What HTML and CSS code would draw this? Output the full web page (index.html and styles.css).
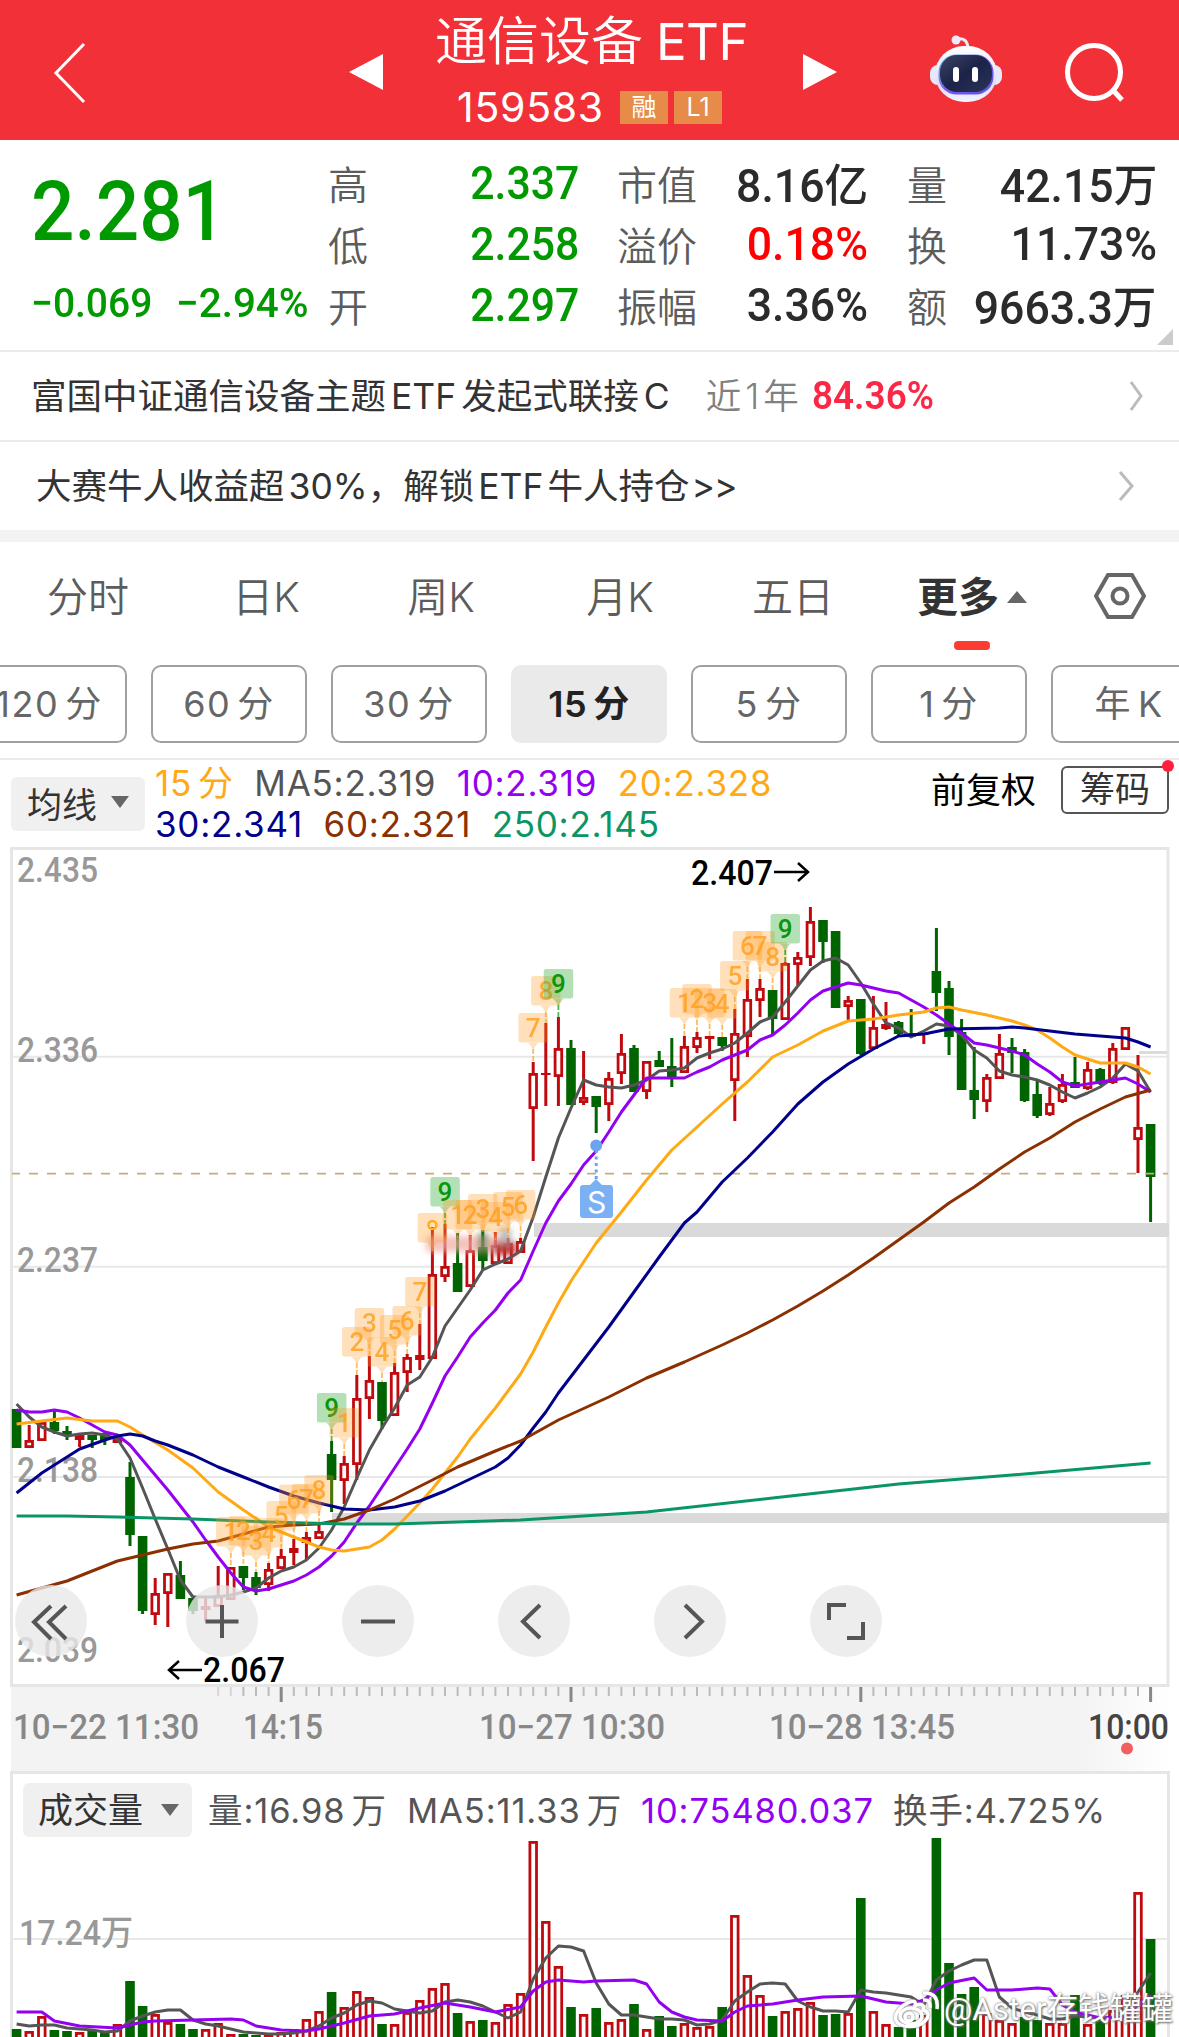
FILE: index.html
```html
<!DOCTYPE html>
<html lang="zh-CN">
<head>
<meta charset="utf-8">
<title>通信设备ETF 159583</title>
<link rel="stylesheet" href="styles.css">
</head>
<body>
<header class="topbar">
  <svg class="back" viewBox="0 0 40 64"><path d="M32 3L4 32L32 61"/></svg>
  <svg class="tri prev" viewBox="0 0 36 38"><path d="M0 19L36 0V38Z"/></svg>
  <div class="title">
    <div class="name">通信设备<span>ETF</span></div>
    <div class="code"><span class="code-no">159583</span><b>融</b><b>L1</b></div>
  </div>
  <svg class="tri next" viewBox="0 0 36 38"><path d="M36 19L0 0V38Z"/></svg>
  <svg class="robot" viewBox="0 0 74 70">
    <defs>
      <linearGradient id="shell" x1="0" y1="0" x2="0" y2="1"><stop offset="0" stop-color="#fff"/><stop offset=".7" stop-color="#dfdcf4"/><stop offset="1" stop-color="#f4f4ff"/></linearGradient>
      <linearGradient id="rim" x1="0" y1="0" x2="1" y2="1"><stop offset="0" stop-color="#59c8de"/><stop offset=".5" stop-color="#7a5cf0"/><stop offset="1" stop-color="#5a4fd8"/></linearGradient>
      <linearGradient id="visor" x1="0" y1="0" x2="1" y2="1"><stop offset="0" stop-color="#3d4366"/><stop offset=".5" stop-color="#1b2348"/><stop offset="1" stop-color="#2b3358"/></linearGradient>
    </defs>
    <path d="M28 4Q38 2 39 13" fill="none" stroke="#eceaf8" stroke-width="3"/>
    <circle cx="27" cy="5" r="4.5" fill="#eceaf8"/>
    <rect x="1" y="30" width="72" height="20" rx="8" fill="#e9e7fa"/>
    <rect x="6" y="11" width="62" height="56" rx="29" fill="url(#shell)"/>
    <rect x="9.500" y="19.500" width="55" height="40" rx="18" fill="url(#rim)"/>
    <rect x="11" y="20" width="52" height="37" rx="17" fill="url(#visor)"/>
    <rect x="24" y="32" width="6" height="15" rx="3" fill="#fff"/>
    <rect x="43" y="32" width="6" height="15" rx="3" fill="#fff"/>
  </svg>
  <svg class="search" viewBox="0 0 62 62"><circle cx="30" cy="30" r="26.500"/><path d="M48 47L58 58"/></svg>
</header>

<section class="quote">
  <div class="price">
    <div class="last"><span class="num">2.281</span></div>
    <div class="delta"><span class="num">−0.069</span><span class="num">−2.94%</span></div>
  </div>
  <dl class="c1">
    <div><dt>高</dt><dd class="down num">2.337</dd></div>
    <div><dt>低</dt><dd class="down num">2.258</dd></div>
    <div><dt>开</dt><dd class="down num">2.297</dd></div>
  </dl>
  <dl class="c2">
    <div><dt>市值</dt><dd class="num">8.16<i>亿</i></dd></div>
    <div><dt>溢价</dt><dd class="num up">0.18%</dd></div>
    <div><dt>振幅</dt><dd class="num">3.36%</dd></div>
  </dl>
  <dl class="c3">
    <div><dt>量</dt><dd class="num">42.15<i>万</i></dd></div>
    <div><dt>换</dt><dd class="num">11.73%</dd></div>
    <div><dt>额</dt><dd class="num">9663.3<i>万</i></dd></div>
  </dl>
  <span class="corner"></span>
</section>

<a class="link-row fund"><span>富国中证通信设备主题<em>ETF</em>发起式联接<em>C</em></span><span class="year">近<em>1</em>年</span><span class="gain num">84.36%</span>
  <svg viewBox="0 0 16 32"><path d="M2 2L12 16L2 30"/></svg></a>
<a class="link-row contest"><span>大赛牛人收益超<em class="pct">30%</em>，解锁<em>ETF</em>牛人持仓<em class="gt">&gt;&gt;</em></span>
  <svg viewBox="0 0 16 32"><path d="M2 2L14 16L2 30"/></svg></a>
<div class="gap"></div>

<nav class="tabs">
  <span>分时</span><span>日K</span><span>周K</span><span>月K</span><span>五日</span>
  <span class="on">更多<i class="caret-up"></i></span>
  <svg class="gear" viewBox="0 0 52 48"><path d="M14 3H38L50 24L38 45H14L2 24Z"/><circle cx="26" cy="24" r="7.500"/></svg>
</nav>
<div class="periods">
  <span>120<i>分</i></span><span>60<i>分</i></span><span>30<i>分</i></span><span class="on">15<i>分</i></span><span>5<i>分</i></span><span>1<i>分</i></span><span>年<i>K</i></span>
</div>

<section class="indicator">
  <div class="select">均线<i class="caret-down"></i></div>
  <div class="ma">
    <div><span class="c-orange">15<u>分</u></span><span class="c-gray">MA5:2.319</span><span class="c-purple">10:2.319</span><span class="c-orange">20:2.328</span></div>
    <div><span class="c-navy">30:2.341</span><span class="c-brown">60:2.321</span><span class="c-green">250:2.145</span></div>
  </div>
  <div class="adjust">前复权</div>
  <div class="chips">筹码<i></i></div>
</section>

<section class="chart">
  <svg id="kline" class="kline" viewBox="0 846 1179 840"></svg>
  <div class="controls">
    <button><svg viewBox="0 0 72 72"><path d="M36 21L19 37L36 54M51 21L34 37L51 54"/></svg></button>
    <button><svg viewBox="0 0 72 72"><path d="M36 20V53M19.500 36.500H52.500"/></svg></button>
    <button><svg viewBox="0 0 72 72"><path d="M19 36.500H53"/></svg></button>
    <button><svg viewBox="0 0 72 72"><path d="M42 20L25 36.500L42 53"/></svg></button>
    <button><svg viewBox="0 0 72 72"><path d="M31 20L48 36.500L31 53"/></svg></button>
    <button><svg viewBox="0 0 72 72"><path d="M19 35V20H36M37 53H53V37"/></svg></button>
  </div>
</section>

<svg id="axis" class="axis" viewBox="0 1686 1179 86"></svg>

<section class="volume">
  <div class="vol-head">
    <div class="select">成交量<i class="caret-down"></i></div>
    <span class="c-gray v1">量:16.98<u>万</u></span><span class="c-gray v2">MA5:11.33<u>万</u></span><span class="c-purple v3">10:75480.037</span><span class="c-gray v4">换手:4.725%</span>
  </div>
  <svg id="vol" class="vol" viewBox="0 1838 1179 199"></svg>
  <div class="credit">
    <svg viewBox="0 0 46 40"><path d="M17 12C8 15 1 24 3 30C6 38 24 39 32 31C38 25 34 21 30 20C32 14 27 13 22 16C23 12 22 10 17 12Z"/><ellipse cx="18" cy="26" rx="11" ry="8"/><circle cx="16" cy="27" r="4"/><path d="M30 10Q38 9 37 18M30 3Q46 2 44 19"/></svg>
    @Aster存钱罐罐
  </div>
</section>
<script src="chart.js"></script>
</body>
</html>
```
FILE: styles.css
```css
* { box-sizing: border-box; }
body { margin: 0; width: 1179px; height: 2037px; overflow: hidden; background: #fff; color: #333; font-family: Inter, "Noto Sans CJK SC", sans-serif; }
i, em { font-style: normal; }
u { text-decoration: none; margin-left: 6px; }
dl, dd { margin: 0; }
.num { font-family: Roboto, "Noto Sans CJK SC", sans-serif; font-weight: 500; display: inline-block; transform: scaleX(.93); transform-origin: left center; white-space: nowrap; }

.topbar { height: 140px; background: #f23038; color: #fff; display: flex; align-items: center; }
.topbar svg { display: block; flex: none; }
.back { width: 40px; height: 64px; margin: 6px 0 0 52px; fill: none; stroke: #fff; stroke-width: 3; }
.tri { width: 34px; height: 38px; fill: #fff; margin-top: 3px; }
.prev { margin-left: 257px; }
.title { width: 420px; padding: 4px 0 0 52px; height: 140px; }
.name { font-size: 52px; line-height: 76px; font-weight: 350; white-space: nowrap; }
.name span { margin-left: 13px; letter-spacing: -.6px; font-weight: 400; font-size: 51px; }
.code { display: flex; align-items: center; height: 54px; padding-left: 22px; }
.code-no { font-size: 41px; width: 163px; letter-spacing: .7px; }
.code b { background: #e68c48; width: 48px; height: 33px; font-size: 25px; line-height: 32px; text-align: center; font-weight: 400; margin-right: 6px; }
.robot { width: 74px; height: 70px; margin: -1px 0 0 92px; }
.search { width: 62px; height: 62px; margin: 6px 0 0 61px; fill: none; stroke: #fff; stroke-width: 5; }

.quote { position: relative; height: 212px; border-bottom: 2px solid #ebebeb; display: flex; padding-top: 12px; }
.price { width: 328px; padding-left: 31px; color: #090; }
.last { height: 116px; font-size: 84px; line-height: 116px; }
.last .num { transform: scaleX(.91); }
.delta { font-size: 41px; line-height: 70px; display: flex; }
.delta .num { width: 145px; transform: scaleX(.95); }
.delta .num:last-child { transform: scaleX(.985); }
.quote dl > div { height: 61px; display: flex; align-items: center; justify-content: space-between; }
.quote dt { font-size: 40px; font-weight: 350; color: #5c5c5c; }
.quote dd { font-size: 46px; transform: scaleX(.97); transform-origin: right center; color: #2b2b2b; }
.quote dd i { font-size: 45px; }
.quote dd.down { color: #090; transform: scaleX(.93); }
.quote dd.up { color: #f00; }
.c1 { width: 251px; }
.c2 { width: 251px; margin-left: 38px; }
.c3 { width: 250px; margin-left: 39px; }
.corner { position: absolute; right: 6px; bottom: 5px; border: 8px solid; border-color: transparent #ccc #ccc transparent; }

.link-row { display: flex; align-items: center; font-size: 35.5px; color: #333; white-space: nowrap; }
.link-row > span:not(.num) { margin-top: -5px; }
.link-row svg { width: 16px; height: 32px; margin-left: auto; fill: none; stroke: #bbb; stroke-width: 3; }
.fund { height: 90px; padding: 0 34px 0 31px; border-bottom: 2px solid #ebebeb; }
.fund em { margin: 0 5px; }
.year { margin-left: 31px; color: #808080; font-weight: 350; }
.year em { margin: 0 4px; }
.gain { margin-left: 13px; color: #fa2846; font-size: 38px; font-weight: 600; transform: scaleX(.97); }
.contest { height: 88px; padding: 0 45px 0 36px; }
.contest em { margin: 0 4px; }
.contest .pct { margin-right: 0; }
.contest .gt { margin-left: 2px; letter-spacing: -1px; }
.gap { height: 12px; background: #f3f3f3; }

.tabs { height: 123px; display: grid; grid-template-columns: 176px 180px 170px 188px 158px 208px 1fr; align-items: start; padding-top: 25px; font-size: 41px; line-height: 60px; font-weight: 350; color: #5c5c5c; text-align: center; }
.tabs .on { font-weight: 700; color: #333; position: relative; text-align: left; padding-left: 45px; }
.tabs .on::after { content: ""; position: absolute; left: 82px; top: 74px; width: 36px; height: 9px; border-radius: 4px; background: #fc3c30; }
.tabs .caret-up { display: inline-block; margin-left: 8px; vertical-align: 9px; border: 10px solid transparent; border-top: 0; border-bottom: 12px solid #666; }
.gear { width: 52px; height: 48px; margin: 5px 0 0 14px; fill: none; stroke: #666; stroke-width: 4; }
.periods { height: 95px; margin-left: -29px; width: 1240px; display: flex; gap: 24px; border-bottom: 2px solid #ebebeb; }
.periods span { width: 156px; height: 78px; flex: none; border: 2px solid #a0a0a0; border-radius: 10px; line-height: 74px; font-size: 36px; color: #666; text-align: center; letter-spacing: 1.5px; }
.periods i { margin-left: 6px; }
.periods .on { background: #eaeaea; border-color: #eaeaea; color: #222; font-weight: 600; letter-spacing: .5px; }

.indicator { height: 86px; display: flex; padding-left: 11px; font-size: 35px; white-space: nowrap; }
.select { background: #f0f0f0; border-radius: 6px; display: flex; align-items: center; justify-content: space-between; font-size: 35px; color: #333; }
.indicator .select { width: 134px; height: 54px; margin-top: 17px; padding: 0 16px 4px; flex: none; }
.caret-down { border: 9px solid transparent; border-bottom: 0; border-top: 12px solid #666; }
.ma { width: 786px; padding: 3px 0 0 10px; line-height: 41px; }
.ma div { display: flex; gap: 20.500px; letter-spacing: .75px; }
.c-orange { color: #ffa915; } .c-gray { color: #555; } .c-purple { color: #9400f0; } .c-navy { color: #00008b; } .c-brown { color: #8b3000; } .c-green { color: #0a9664; }
.adjust { color: #000; line-height: 60px; width: 130px; }
.chips { position: relative; width: 108px; height: 48px; margin-top: 6px; border: 2px solid #555; border-radius: 6px; line-height: 43px; text-align: center; }
.chips i { position: absolute; right: -7px; top: -8px; width: 12px; height: 12px; border-radius: 50%; background: #ff2040; }

.chart { position: relative; height: 840px; }
.kline, .axis, .vol { display: block; width: 1179px; overflow: visible; }
.kline text, .axis text, .vol text { font-family: Roboto, "Noto Sans CJK SC", sans-serif; font-weight: 500; font-size: 35px; }
.kline text.mark { font-size: 26px; }
.kline text.sell { font-family: Inter, sans-serif; font-size: 30px; font-weight: 400; }
.controls { position: absolute; left: 15px; top: 739px; display: flex; gap: 84px; }
.controls button { width: 72px; height: 72px; padding: 0; border: 0; border-radius: 50%; background: rgba(232, 232, 232, .8); }
.controls button:first-child { margin-right: 15px; }
.controls svg { display: block; fill: none; stroke: #555; stroke-width: 4; }
.axis { height: 86px; background: linear-gradient(90deg, transparent 11px, #f3f3f3 11px, #f3f3f3 1080px, #fff 1168px); }

.volume { position: relative; height: 265px; }
.volume::before { content: ""; position: absolute; left: 10px; right: 9px; top: -1px; bottom: -5px; border: 3px solid #e6e6e6; }
.vol-head { position: relative; height: 66px; padding: 11px 0 0 23px; display: flex; font-size: 34.5px; line-height: 56px; white-space: nowrap; letter-spacing: .9px; }
.vol-head .select { width: 169px; height: 54px; padding: 0 13px 0 15px; letter-spacing: 0; margin-right: 16px; }
.v1 { width: 199px; } .v2 { width: 234px; } .v3 { width: 252px; }
.vol { position: relative; height: 199px; }
.credit { position: absolute; left: 893px; top: 215px; height: 46px; display: flex; align-items: center; gap: 5px; color: #fff; font: 31.5px/46px Roboto, "Noto Sans CJK SC", sans-serif; white-space: nowrap; text-shadow: 0 0 3px #777, 1px 1px 2px #777; }
.credit svg { width: 46px; height: 40px; fill: none; stroke: #fff; stroke-width: 3.5; filter: drop-shadow(0 0 1px #777); }
```
FILE: chart.js
```js
const RED = '#c00a0f', GREEN = '#006400';
const X = i => +(16.6 + 12.6 * i).toFixed(1);
const line = (x1, y1, x2, y2, c, w, extra = '') => `<line x1="${x1}" y1="${y1}" x2="${x2}" y2="${y2}" stroke="${c}" stroke-width="${w}" ${extra}/>`;
const label = (x, y, s, len, fill, cls = '') => `<text x="${x}" y="${y}" fill="${fill}" class="${cls}"${len ? ` textLength="${len}" lengthAdjust="spacingAndGlyphs"` : ''}>${s}</text>`;
const curve = (pts, c) => `<polyline fill="none" stroke="${c}" stroke-width="3" stroke-linejoin="round" points="${pts.map(p => X(p[0]) + ',' + p[1]).join(' ')}"/>`;
const series = a => a.map((y, i) => [i, y]);
const pairs = s => s.trim().split(/\s+/).map(p => p.split(',').map(Number));

// one row per bar: up/down, high, body top, body bottom, low
const bars = `
d 1409 1409 1448 1448|u 1425 1440 1448 1448|u 1422 1422 1441 1441|d 1410 1422 1431 1434|d 1426 1431 1436 1440|f 1435 1435 1440 1447|d 1435 1435 1440 1448|d 1433 1433 1440 1445|f 1437 1437 1443 1443|d 1462 1477 1535 1546
d 1536 1536 1611 1614|u 1578 1593 1615 1625|u 1573 1573 1594 1627|d 1561 1575 1599 1599|d 1598 1598 1611 1614|f 1597 1606 1610 1621|u 1566 1595 1607 1607|u 1567 1567 1600 1600|d 1566 1566 1578 1590|d 1572 1577 1588 1595
u 1563 1569 1585 1591|u 1549 1556 1569 1569|u 1539 1548 1553 1565|u 1532 1537 1543 1559|u 1522 1531 1539 1539|d 1441 1454 1480 1512|u 1456 1463 1481 1504|u 1375 1398 1465 1480|u 1356 1380 1399 1419|d 1382 1382 1421 1429
u 1363 1372 1416 1416|u 1354 1357 1373 1392|u 1324 1355 1360 1370|u 1227 1274 1359 1359|u 1224 1266 1277 1282|d 1233 1263 1292 1292|u 1235 1250 1287 1287|d 1230 1247 1261 1270|u 1232 1245 1264 1264|u 1238 1243 1264 1264
u 1238 1241 1253 1253|u 1062 1073 1109 1161|f 1023 1073 1075 1106|u 1017 1048 1077 1106|d 1040 1048 1105 1105|u 1051 1097 1103 1105|d 1096 1096 1107 1133|u 1072 1078 1105 1121|u 1034 1053 1074 1084|d 1045 1048 1092 1092
u 1061 1061 1092 1099|d 1051 1060 1067 1067|d 1038 1066 1077 1087|u 1036 1046 1073 1073|u 1032 1037 1048 1053|f 1036 1036 1039 1059|d 1037 1037 1046 1051|u 1009 1033 1081 1121|u 979 999 1037 1057|u 979 988 1001 1017
d 990 990 1019 1035|u 962 963 1020 1020|u 952 957 965 985|u 907 921 958 966|d 920 920 942 963|d 931 931 1008 1008|u 996 1000 1007 1020|d 999 999 1054 1055|u 996 1027 1049 1049|f 1002 1024 1029 1030
d 1021 1022 1034 1035|d 1009 1033 1037 1037|f 1033 1033 1035 1044|d 928 971 993 1011|d 981 988 1037 1055|d 1019 1032 1090 1090|d 1047 1090 1100 1119|u 1074 1077 1102 1112|u 1034 1053 1079 1079|d 1038 1047 1053 1073
d 1049 1052 1101 1102|d 1080 1094 1116 1118|u 1087 1103 1115 1116|u 1074 1084 1102 1103|d 1057 1082 1088 1088|u 1062 1069 1089 1090|d 1068 1069 1084 1085|u 1043 1048 1083 1084|u 1027 1027 1050 1050|u 1055 1127 1140 1173
d 1124 1124 1177 1222`.trim().split(/[|\n]/).map(r => { const [k, ...v] = r.split(' '); return [k, ...v.map(Number)]; });

const ma5 = series([1404,1417,1427,1432,1436,1434,1433,1435,1439,1458,1488,1519,1549,1580,1597,1597,1597,1595,1592,1588,1578,1571,1567,1560,1548,1530,1507,1478,1450,1428,1408,1385,1377,1357,1326,1308,1290,1270,1264,1259,1251,1217,1177,1138,1108,1080,1085,1087,1088,1085,1080,1071,1070,1068,1058,1053,1049,1043,1033,1022,1017,1002,986,970,961,958,965,983,1004,1023,1028,1037,1031,1024,1026,1035,1050,1058,1071,1075,1077,1080,1085,1092,1098,1093,1087,1078,1064,1071,1092]);
const ma10 = series([1410,1412,1412,1410,1412,1418,1425,1432,1435,1445,1460,1475,1490,1506,1522,1540,1557,1573,1587,1591,1589,1585,1581,1575,1567,1556,1542,1523,1506,1487,1468,1449,1429,1403,1376,1357,1337,1323,1310,1293,1280,1251,1223,1201,1184,1165,1151,1132,1112,1095,1078,1078,1078,1078,1072,1067,1060,1055,1050,1040,1035,1025,1013,1000,991,987,983,985,988,991,993,1000,1007,1015,1024,1033,1043,1045,1048,1051,1055,1064,1072,1082,1086,1084,1082,1080,1078,1084,1092]);
const ma20 = pairs('0,1424 2,1421 4,1418 6,1421 8,1421 9,1427 10,1435 12,1450 14,1468 16,1492 18,1510 20,1527 22,1537 24,1547 25,1550 26,1551 27,1549 28,1547 29,1540 30,1529 31,1516 32,1503 33,1489 34,1473 35,1457 36,1439 38,1408 40,1374 41,1352 42,1327 43,1303 44,1281 46,1243 48,1212 50,1180 52,1150 54,1127 56,1104 58,1082 60,1057 62,1045 64,1031 66,1021 68,1019 70,1015 72,1012 73,1008 74,1007 75,1010 77,1015 79,1021 80,1025 81,1030 82,1038 83,1047 84,1055 85,1059 86,1063 88,1063 89,1067 90,1074');
const ma30 = pairs('0,1493 2,1473 5,1449 7,1440 8,1436 9,1434 10,1436 11,1441 12,1445 14,1455 16,1467 18,1477 20,1487 22,1496 24,1503 26,1509 28,1510 30,1507 32,1501 34,1491 36,1479 38,1467 39,1458 40,1445 41,1428 42,1412 43,1393 45,1360 47,1327 49,1292 51,1257 53,1223 54,1212 56,1182 58,1158 60,1132 62,1104 64,1082 66,1064 68,1049 70,1036 72,1034 74,1029 78,1028 79,1027 80,1028 82,1031 84,1034 86,1036 88,1038 89,1042 90,1047');
const ma60 = pairs('0,1595 4,1581 8,1561 10,1555 12,1549 14,1544 16,1541 18,1534 20,1527 22,1525 24,1524 26,1519 28,1510 30,1499 33,1480 35,1467 38,1451 40,1441 43,1420 47,1397 50,1378 53,1362 56,1345 58,1333 60,1320 62,1306 64,1291 66,1275 68,1258 70,1240 72,1222 74,1203 76,1187 78,1169 80,1152 82,1138 84,1122 86,1109 88,1097 90,1090');
const ma250 = pairs('0,1516 4,1516 8,1517 14,1519 20,1522 26,1524 30,1524 35,1522 40,1520 50,1512 60,1498 70,1484 80,1474 90,1463');

// sequence counters: bar index, digit, top of the tag
const tags = [[17,1,1517],[18,2,1516],[19,3,1526],[20,4,1518],[21,5,1501],[22,6,1484.5],[23,7,1484],[24,8,1475],[25,9,1393],[26,1,1408],[27,2,1327],[28,3,1308],[29,4,1337],[30,5,1315],[31,6,1306],[32,7,1277],[33,0,1213],[34,9,1177],[35,1,1200],[36,2,1200],[37,3,1194],[38,4,1202],[39,5,1192],[40,6,1190],[41,7,1013],[42,8,976],[43,9,969],[53,1,988],[54,2,984],[55,3,988],[56,4,989],[57,5,961],[58,6,931],[59,7,931],[60,8,942],[61,9,914]];

let k = `<defs><filter id="soft" x="-20%" y="-50%" width="140%" height="200%"><feGaussianBlur stdDeviation="3"/></filter></defs>`;
k += `<rect x="11.500" y="848.500" width="1156.500" height="837" fill="none" stroke="#e6e6e6" stroke-width="3"/>`;
[1056.7, 1266.7, 1477].forEach(y => k += line(12, y, 1167, y, '#e8e8e8', 2));
k += line(1139, 1052.5, 1167, 1052.5, '#dcdcdc', 3);
k += `<rect x="534" y="1223" width="635" height="14" fill="#dadada"/><rect x="332" y="1513" width="837" height="10" fill="#dadada"/>`;
[[882,'2.435'],[1062,'2.336'],[1272,'2.237'],[1482,'2.138'],[1662,'2.039']].forEach(t => k += label(17, t[0], t[1], 81, '#999'));
bars.forEach(([kind, hi, top, bot, low], i) => {
  const x = X(i), c = kind === 'd' ? GREEN : RED;
  if (kind === 'u') {
    if (hi < top) k += line(x, hi, x, top + 1, c, 3);
    if (low > bot) k += line(x, bot - 1, x, low, c, 3);
    k += `<rect x="${x - 3.3}" y="${top + 1.4}" width="6.600" height="${Math.max(bot - top - 2.8, 1)}" fill="#fff" stroke="${c}" stroke-width="2.800"/>`;
  } else {
    k += line(x, hi, x, low, c, 3) + `<rect x="${x - 4.8}" y="${top}" width="9.600" height="${bot - top}" fill="${c}"/>`;
  }
});
k += line(12, 1173.7, 1168, 1173.7, '#c8ac78', 1.8, 'stroke-dasharray="9 9" stroke-dashoffset="1"');
k += curve(ma5, '#555') + curve(ma10, '#9400f0') + curve(ma20, '#ffa915') + curve(ma30, '#00008b') + curve(ma60, '#8b3000') + curve(ma250, '#0a9664');
k += `<g filter="url(#soft)"><rect x="426" y="1236" width="74" height="16" fill="#f0aaa4" opacity=".7"/><rect x="478" y="1232" width="10" height="26" fill="#1d6b1d" opacity=".5"/><rect x="494" y="1242" width="22" height="13" fill="#b33" opacity=".95"/><rect x="500" y="1228" width="11" height="16" fill="#aaa" opacity=".8"/></g>`;
tags.forEach(([i, n, y]) => {
  const x = X(i), g = n === 9, c = g ? '#0a960a' : '#ff9f1c', hi = bars[i][1];
  k += line(x, y + 36, x, Math.max(hi, y + 38), c, 1.8, 'stroke-dasharray="5 2" opacity=".7"');
  k += `<g fill="${g ? '#22a82a' : '#ff9b1e'}" opacity="${g ? .34 : .3}"><rect x="${x - 14.7}" y="${y}" width="29.500" height="29.500" rx="2.500"/><path d="M${x - 6} ${y + 29.5}h12q-3 1-6 8q-3-7-6-8z"/></g>`;
  k += n ? `<text class="mark" x="${x}" y="${y + 24}" text-anchor="middle" fill="${c}" opacity="${g ? 1 : .8}">${n}</text>` : `<circle cx="${x}" cy="${y + 12}" r="4" fill="none" stroke="#ffad20" stroke-width="2.500"/>`;
});
k += `<circle cx="596.200" cy="1145.500" r="6" fill="#6ea3f2"/>` + line(596.2, 1150, 596.2, 1183, '#6ea3f2', 3, 'stroke-dasharray="3 3.500"');
k += `<path d="M590 1185l6-6l6 6z" fill="#7cb0f5"/><rect x="580" y="1185" width="33" height="33" rx="3" fill="#7cb0f5"/><text class="sell" x="596.500" y="1212.500" text-anchor="middle" fill="#fff">S</text>`;
k += label(691, 885, '2.407', 82, '#000') + label(203, 1682, '2.067', 82, '#000');
k += `<path d="M774 872H808M798 863L808 872L798 881M202 1670H169M179 1661L169 1670L179 1679" fill="none" stroke="#000" stroke-width="2.500"/>`;
document.getElementById('kline').innerHTML = k;

let a = '';
for (let i = 16; i <= 90; i++) {
  const major = (i - 21) % 23 === 0;
  a += line(X(i), 1687, X(i), major ? 1702 : 1696, major ? '#888' : '#bbb', major ? 3 : 2, i < 18 ? 'opacity=".5"' : '');
}
a += label(13, 1739, '10−22 11:30', 186, '#888') + label(243, 1739, '14:15', 80, '#888') + label(479, 1739, '10−27 10:30', 186, '#888') + label(769, 1739, '10−28 13:45', 186, '#888') + label(1088, 1739, '10:00', 81, '#444');
a += `<circle cx="1127" cy="1748.500" r="6" fill="#f06060"/>`;
document.getElementById('axis').innerHTML = a;

const volTop = [2029,2031,2016,2030,2031,2032,2030,2032,2024,1981,2006,2014,2022,2024,2029,2029,2023,2034,2034,2035,2035,2032,2029,2019,2011,1992,2007,1991,1997,2024,2024,2012,2000,1988,1983,2013,2021,2020,2022,2004,1993,1841,1921,1966,2007,2014,2008,2022,2019,2004,2029,2016,2026,2023,2027,2026,2007,1915,1975,1995,2016,2011,2008,2002,2015,2014,2013,1898,2011,2024,2027,2020,2015,1838,1963,1994,1987,2013,2020,2023,2017,2020,2023,2023,1995,2024,2018,2010,1995,1892,1939];
const v5 = series([2024,2026,2025,2025,2028,2029,2030,2032,2031,2021,2016,2012,2010,2010,2020,2024,2026,2029,2032,2033,2034,2034,2033,2031,2026,2018,2013,2005,2001,2003,2009,2011,2013,2011,2002,2000,2002,2006,2012,2018,2012,1979,1958,1946,1947,1951,1983,2004,2015,2015,2017,2019,2019,2020,2025,2024,2020,2001,1992,1984,1983,1984,2001,2007,2011,2011,2012,1990,1992,1993,1995,1997,2005,1980,1971,1965,1960,1960,1997,2008,2012,2015,2019,2019,2016,2017,2018,2017,2010,1992,1973]);
const v10 = pairs('0,2012 2,2012 3,2021 5,2026 8,2028 9,2025 10,2022 11,2021 14,2020 17,2019 18,2020 19,2026 21,2030 23,2031 24,2029 26,2023 28,2016 30,2014 32,2008 34,2003 36,2007 38,2012 40,2007 41,1991 42,1982 43,1980 45,1982 46,1981 49,1980 50,1984 51,2002 52,2012 53,2017 54,2020 56,2021 57,2012 58,2006 60,2004 62,2000 64,1997 67,1996 69,2002 71,2004 72,2000 73,1990 74,1983 76,1978 77,1990 79,1990 81,1988 82,1989 83,2005 84,2012 86,2018 88,2017 89,2005 90,1995');
let v = line(12, 1939, 1167, 1939, '#e8e8e8', 2) + label(19, 1945, '17.24万', 114, '#999');
const volGreen = new Set([35, 37, 51, 52]);
const volRed = new Set([36, 53]);
volTop.forEach((y, i) => {
  const x = X(i), down = !volRed.has(i) && (bars[i][0] === 'd' && i !== 79 || volGreen.has(i));
  v += down ? `<rect x="${x - 4.8}" y="${y}" width="9.600" height="${2040 - y}" fill="${GREEN}"/>`
    : `<rect x="${x - 3.3}" y="${y + 1.4}" width="6.600" height="${2042 - y}" fill="#fff" stroke="${RED}" stroke-width="2.800"/>`;
});
v += curve(v5, '#555') + curve(v10, '#9400f0');
document.getElementById('vol').innerHTML = v;
```
